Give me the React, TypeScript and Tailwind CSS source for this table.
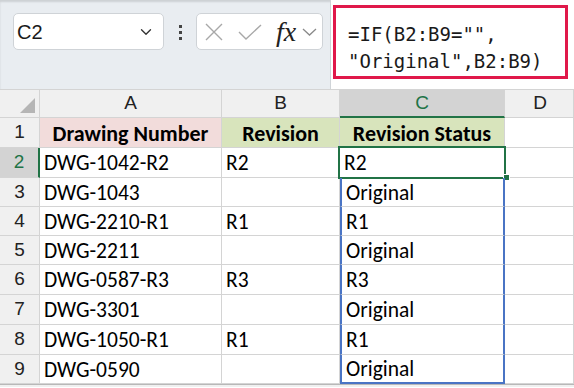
import { ChevronDown } from 'lucide-react'

const rows = [
  { n: 2, a: 'DWG-1042-R2', b: 'R2', c: 'R2', h: 30 },
  { n: 3, a: 'DWG-1043', b: '', c: 'Original', h: 29 },
  { n: 4, a: 'DWG-2210-R1', b: 'R1', c: 'R1', h: 29 },
  { n: 5, a: 'DWG-2211', b: '', c: 'Original', h: 29 },
  { n: 6, a: 'DWG-0587-R3', b: 'R3', c: 'R3', h: 30 },
  { n: 7, a: 'DWG-3301', b: '', c: 'Original', h: 30 },
  { n: 8, a: 'DWG-1050-R1', b: 'R1', c: 'R1', h: 30 },
  { n: 9, a: 'DWG-0590', b: '', c: 'Original', h: 29 },
]

const cell = 'border-r border-b border-[#d4d4d4] flex items-center'
const ui = { fontFamily: '"Liberation Sans", Arial, sans-serif' }
const sheet = { fontFamily: 'Carlito, Lato, sans-serif' }

export default function App() {
  return (
    <div className="relative h-[388px] w-[574px] overflow-hidden bg-white">
      {/* formula bar */}
      <div className="flex h-[90px] border-b border-[#d4d4d4] bg-[#e9edf1] shadow-[inset_0_2px_2px_rgba(0,0,0,0.12)]">
        <div
          className="ml-[13px] mt-[13px] flex h-[37px] w-[151px] items-center justify-between rounded-[5px] border border-[#cfd3d7] bg-white pl-[3px] pr-[8px] text-[20px] text-[#1a1a1a]"
          style={ui}
        >
          <span>C2</span>
          <ChevronDown size={18} strokeWidth={1.8} className="text-[#333]" />
        </div>
        <div className="mt-[25px] flex w-[32px] flex-col items-center gap-[3px]">
          <span className="h-[3px] w-[3px] bg-[#444]" />
          <span className="h-[3px] w-[3px] bg-[#444]" />
          <span className="h-[3px] w-[3px] bg-[#444]" />
        </div>
        <div className="mt-[13px] flex h-[37px] w-[127px] items-center rounded-[5px] border border-[#cfd3d7] bg-white">
          <svg width="18" height="18" viewBox="0 0 18 18" className="ml-[8px]">
            <path d="M1 1 L17 17 M17 1 L1 17" stroke="#a8a8a8" strokeWidth="1.4" fill="none" />
          </svg>
          <svg width="24" height="16" viewBox="0 0 24 16" className="ml-[15px]">
            <path d="M1 8 L8 15 L23 1" stroke="#a8a8a8" strokeWidth="1.4" fill="none" />
          </svg>
          <span
            className="ml-[14px] text-[28px] italic leading-none text-[#222]"
            style={{ fontFamily: '"Liberation Serif", "DejaVu Serif", serif' }}
          >
            fx
          </span>
          <svg width="15" height="8" viewBox="0 0 15 8" className="ml-[6px]">
            <path d="M1 1 L7.5 7 L14 1" stroke="#8a8a8a" strokeWidth="1.3" fill="none" />
          </svg>
        </div>
        <div className="ml-[7px] flex-1 border-l border-[#d0d4d8] bg-white pl-[2px] pt-[5px]">
          <div
            className="h-[74px] w-[235px] border-[3px] border-[#e0184a] pl-[12px] pt-[13px] text-[19px] leading-[27px] text-[#1a1a1a]"
            style={{ fontFamily: '"DejaVu Sans Mono", monospace' }}
          >
            <div>=IF(B2:B9="",</div>
            <div>"Original",B2:B9)</div>
          </div>
        </div>
      </div>

      {/* grid */}
      <div className="grid grid-cols-[40px_182px_118px_165px_1fr]">
        <div className={`${cell} h-[28px] justify-end items-end bg-[#f0f0f0] pb-[4px] pr-[4px]`}>
          <svg width="15" height="15" viewBox="0 0 15 15">
            <polygon points="15,0 15,15 0,15" fill="#b5b5b5" />
          </svg>
        </div>
        {['A', 'B'].map((l) => (
          <div key={l} className={`${cell} h-[28px] justify-center bg-[#f0f0f0] text-[19px] text-[#222]`} style={ui}>
            {l}
          </div>
        ))}
        <div
          className="flex h-[28px] items-center justify-center border-r border-b-2 border-r-[#d4d4d4] border-b-[#217346] bg-[#d3d3d3] text-[19px] text-[#217346]"
          style={ui}
        >
          C
        </div>
        <div className={`${cell} h-[28px] justify-center bg-[#f0f0f0] pl-[2px] text-[19px] text-[#222]`} style={ui}>
          D
        </div>

        <div className={`${cell} h-[30px] justify-center bg-[#f0f0f0] text-[19px] text-[#222]`} style={ui}>
          1
        </div>
        <div className={`${cell} h-[30px] justify-center bg-[#f2dcdb] pt-[2px] text-[22px] font-bold text-black`} style={sheet}>
          Drawing Number
        </div>
        <div className={`${cell} h-[30px] justify-center bg-[#d8e4bc] pt-[2px] text-[22px] font-bold text-black`} style={sheet}>
          Revision
        </div>
        <div className={`${cell} h-[30px] justify-center bg-[#d8e4bc] pt-[2px] text-[22px] font-bold text-black`} style={sheet}>
          Revision Status
        </div>
        <div className={`${cell} h-[30px]`} />

        {rows.map((r) => {
          const sel = r.n === 2
          const last = r.n === 9
          return [
            <div
              key={`n${r.n}`}
              className={`flex items-center justify-center border-b border-[#d4d4d4] text-[19px] ${
                sel ? 'border-r-2 border-r-[#217346] bg-[#d3d3d3] text-[#217346]' : 'border-r bg-[#f0f0f0] text-[#222]'
              }`}
              style={{ ...ui, height: r.h }}
            >
              {r.n}
            </div>,
            <div key={`a${r.n}`} className={`${cell} pl-[4px] pt-[2px] text-[21.5px] text-black`} style={{ ...sheet, height: r.h }}>
              {r.a}
            </div>,
            <div key={`b${r.n}`} className={`${cell} pl-[4px] pt-[2px] text-[21.5px] text-black`} style={{ ...sheet, height: r.h }}>
              {r.b}
            </div>,
            <div
              key={`c${r.n}`}
              className={`relative flex items-center border-b pl-[4px] pt-[2px] text-[21.5px] text-black ${
                sel
                  ? 'border-[#d4d4d4]'
                  : `border-x-2 border-x-[#4a74c4] ${last ? 'border-b-2 border-b-[#4a74c4]' : 'border-b-[#d4d4d4]'}`
              }`}
              style={{ ...sheet, height: r.h }}
            >
              {sel && (
                <>
                  <div className="absolute -left-[2px] -top-[2px] h-[33px] w-[168px] border-2 border-[#217346]" />
                  <div className="absolute -bottom-[4px] -right-[5px] h-[7px] w-[7px] border border-white bg-[#217346]" />
                </>
              )}
              {r.c}
            </div>,
            <div key={`d${r.n}`} className={`${cell}`} style={{ height: r.h }} />,
          ]
        })}
      </div>
      <div className="h-[3px] border-t border-[#b8b8b8] bg-[#f0f0f0]" />
    </div>
  )
}
